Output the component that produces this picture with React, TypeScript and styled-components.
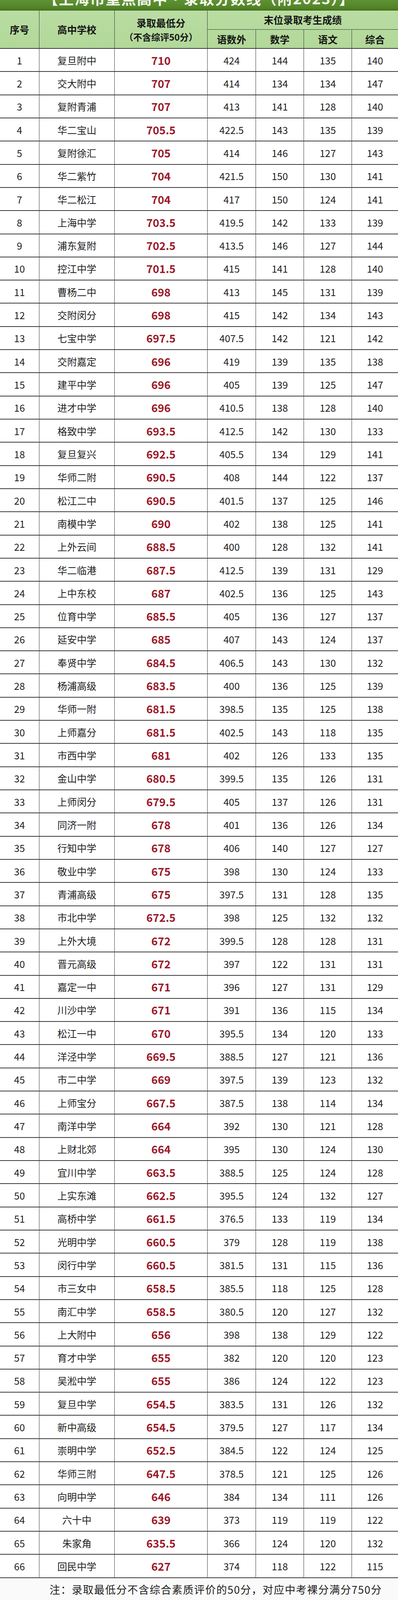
import React from 'react';
import styled, { createGlobalStyle } from 'styled-components';

const GlobalStyle = createGlobalStyle`
  html, body {
    margin: 0;
    padding: 0;
    background: #ffffff;
  }
  body {
    font-family: "Noto Sans CJK SC", "Noto Sans", sans-serif;
    color: #1f1f1f;
  }
`;

const COLS = '101px 193px 238px 124px 123px 123px 118px';
const LINE = '#3a3a3a';

const Page = styled.div`
  width: 1020px;
  height: 4110px;
  overflow: hidden;
  background: #fdfdfd;
`;

// the banner is cropped in the source: only the lower part of its text shows
const TitleBar = styled.div`
  height: 25px;
  overflow: hidden;
  background: linear-gradient(180deg, #5f9234 0%, #548629 70%, #4a7a22 100%);
  border-bottom: 2px solid #3f6a1c;
`;

const TitleText = styled.div`
  margin-top: -30px;
  text-align: center;
  color: #f4f8ee;
  font-size: 38px;
  font-weight: 700;
  line-height: 50px;
  letter-spacing: 2px;
  white-space: nowrap;
`;

const Header = styled.div`
  display: grid;
  grid-template-columns: ${COLS};
  grid-template-rows: 49px 49px;
  height: 98px;
  background: linear-gradient(180deg, #b9dca2 0%, #b2d899 100%);
  border-bottom: 2px solid ${LINE};
  box-sizing: border-box;
`;

const HeadCell = styled.div<{ $span?: boolean; $group?: boolean; $last?: boolean }>`
  display: flex;
  flex-direction: column;
  align-items: center;
  justify-content: center;
  grid-row: ${p => (p.$span ? '1 / 3' : 'auto')};
  grid-column: ${p => (p.$group ? '4 / 8' : 'auto')};
  border-right: ${p => (p.$last ? 'none' : `1.5px solid ${LINE}`)};
  border-bottom: ${p => (p.$group ? `1.5px solid ${LINE}` : 'none')};
  font-size: 25px;
  font-weight: 700;
  color: #151515;
  line-height: 1.25;
`;

const SubNote = styled.span`
  font-size: 23px;
  margin-top: 6px;
`;

const Row = styled.div`
  display: grid;
  grid-template-columns: ${COLS};
  height: 59.32px;
  box-sizing: border-box;
  border-bottom: 2px solid ${LINE};
  background: #ffffff;
`;

const Cell = styled.div<{ $last?: boolean; $score?: boolean }>`
  display: flex;
  align-items: center;
  justify-content: center;
  border-right: ${p => (p.$last ? 'none' : `1.5px solid ${LINE}`)};
  font-size: ${p => (p.$score ? '28px' : '25px')};
  font-weight: ${p => (p.$score ? 700 : 400)};
  color: ${p => (p.$score ? '#9c1a29' : '#1f1f1f')};
`;

const Note = styled.div`
  height: 60px;
  display: flex;
  align-items: center;
  padding-left: 127px;
  border-bottom: 2px solid ${LINE};
  box-sizing: border-box;
  font-size: 27px;
  letter-spacing: 1.5px;
  color: #1f1f1f;
  background: #fafafa;
`;

type School = [string, string, string, string, string, string];

const data: School[] = [
  ['复旦附中', '710', '424', '144', '135', '140'],
  ['交大附中', '707', '414', '134', '134', '147'],
  ['复附青浦', '707', '413', '141', '128', '140'],
  ['华二宝山', '705.5', '422.5', '143', '135', '139'],
  ['复附徐汇', '705', '414', '146', '127', '143'],
  ['华二紫竹', '704', '421.5', '150', '130', '141'],
  ['华二松江', '704', '417', '150', '124', '141'],
  ['上海中学', '703.5', '419.5', '142', '133', '139'],
  ['浦东复附', '702.5', '413.5', '146', '127', '144'],
  ['控江中学', '701.5', '415', '141', '128', '140'],
  ['曹杨二中', '698', '413', '145', '131', '139'],
  ['交附闵分', '698', '415', '142', '134', '143'],
  ['七宝中学', '697.5', '407.5', '142', '121', '142'],
  ['交附嘉定', '696', '419', '139', '135', '138'],
  ['建平中学', '696', '405', '139', '125', '147'],
  ['进才中学', '696', '410.5', '138', '128', '140'],
  ['格致中学', '693.5', '412.5', '142', '130', '133'],
  ['复旦复兴', '692.5', '405.5', '134', '129', '141'],
  ['华师二附', '690.5', '408', '144', '122', '137'],
  ['松江二中', '690.5', '401.5', '137', '125', '146'],
  ['南模中学', '690', '402', '138', '125', '141'],
  ['上外云间', '688.5', '400', '128', '132', '141'],
  ['华二临港', '687.5', '412.5', '139', '131', '129'],
  ['上中东校', '687', '402.5', '136', '125', '143'],
  ['位育中学', '685.5', '405', '136', '127', '137'],
  ['延安中学', '685', '407', '143', '124', '137'],
  ['奉贤中学', '684.5', '406.5', '143', '130', '132'],
  ['杨浦高级', '683.5', '400', '136', '125', '139'],
  ['华师一附', '681.5', '398.5', '135', '125', '138'],
  ['上师嘉分', '681.5', '402.5', '143', '118', '135'],
  ['市西中学', '681', '402', '126', '133', '135'],
  ['金山中学', '680.5', '399.5', '135', '126', '131'],
  ['上师闵分', '679.5', '405', '137', '126', '131'],
  ['同济一附', '678', '401', '136', '126', '134'],
  ['行知中学', '678', '406', '140', '127', '127'],
  ['敬业中学', '675', '398', '130', '124', '133'],
  ['青浦高级', '675', '397.5', '131', '128', '135'],
  ['市北中学', '672.5', '398', '125', '132', '132'],
  ['上外大境', '672', '399.5', '128', '128', '131'],
  ['晋元高级', '672', '397', '122', '131', '131'],
  ['嘉定一中', '671', '396', '127', '131', '129'],
  ['川沙中学', '671', '391', '136', '115', '134'],
  ['松江一中', '670', '395.5', '134', '120', '133'],
  ['洋泾中学', '669.5', '388.5', '127', '121', '136'],
  ['市二中学', '669', '397.5', '139', '123', '132'],
  ['上师宝分', '667.5', '387.5', '138', '114', '134'],
  ['南洋中学', '664', '392', '130', '121', '128'],
  ['上财北郊', '664', '395', '130', '124', '130'],
  ['宜川中学', '663.5', '388.5', '125', '124', '128'],
  ['上实东滩', '662.5', '395.5', '124', '132', '127'],
  ['高桥中学', '661.5', '376.5', '133', '119', '134'],
  ['光明中学', '660.5', '379', '128', '119', '138'],
  ['闵行中学', '660.5', '381.5', '131', '115', '136'],
  ['市三女中', '658.5', '385.5', '118', '125', '128'],
  ['南汇中学', '658.5', '380.5', '120', '127', '132'],
  ['上大附中', '656', '398', '138', '129', '122'],
  ['育才中学', '655', '382', '120', '120', '123'],
  ['吴淞中学', '655', '386', '124', '122', '123'],
  ['复旦中学', '654.5', '383.5', '131', '126', '132'],
  ['新中高级', '654.5', '379.5', '127', '117', '134'],
  ['崇明中学', '652.5', '384.5', '122', '124', '125'],
  ['华师三附', '647.5', '378.5', '121', '125', '126'],
  ['向明中学', '646', '384', '134', '111', '126'],
  ['六十中', '639', '373', '119', '119', '122'],
  ['朱家角', '635.5', '366', '124', '120', '132'],
  ['回民中学', '627', '374', '118', '122', '115'],
];

const App: React.FC = () => {
  return (
    <Page>
      <GlobalStyle />
      <TitleBar>
        <TitleText>【上海市重点高中·录取分数线（附2023）】</TitleText>
      </TitleBar>

      <Header>
        <HeadCell $span>序号</HeadCell>
        <HeadCell $span>高中学校</HeadCell>
        <HeadCell $span>
          录取最低分
          <SubNote>（不含综评50分）</SubNote>
        </HeadCell>
        <HeadCell $group $last>末位录取考生成绩</HeadCell>
        <HeadCell>语数外</HeadCell>
        <HeadCell>数学</HeadCell>
        <HeadCell>语文</HeadCell>
        <HeadCell $last>综合</HeadCell>
      </Header>

      {data.map(([name, score, total, math, chinese, comp], i) => (
        <Row key={name}>
          <Cell>{i + 1}</Cell>
          <Cell>{name}</Cell>
          <Cell $score>{score}</Cell>
          <Cell>{total}</Cell>
          <Cell>{math}</Cell>
          <Cell>{chinese}</Cell>
          <Cell $last>{comp}</Cell>
        </Row>
      ))}

      <Note>注：录取最低分不含综合素质评价的50分，对应中考裸分满分750分</Note>
    </Page>
  );
};

export default App;
